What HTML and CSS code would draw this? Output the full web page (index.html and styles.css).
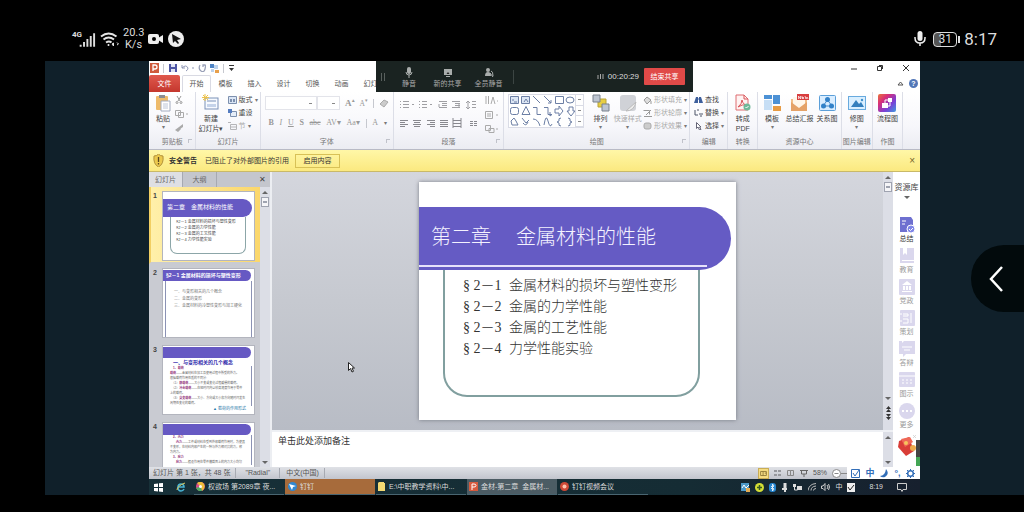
FILE: index.html
```html
<!DOCTYPE html>
<html lang="zh-CN">
<head>
<meta charset="utf-8">
<title>金材-第二章 金属材料的性能</title>
<link rel="stylesheet" href="styles.css">
</head>
<body>
<header class="phone-bar">
  <div class="phone-left">
    <svg width="25" height="18" viewBox="0 0 26 18"><path d="M9 15v2M12.500 12v5M16 9v8M19.500 6v11M23 3v14" stroke="#ddd" stroke-width="2"/></svg>
    <span class="net-type">4G</span>
    <svg width="19" height="18" viewBox="0 0 19 18" fill="none" stroke="#e4e4e4" stroke-width="2"><path d="M1 6.500q7.500-6 15.500 0M3.500 9.500q5-4 10.500 0M6 12.500q3-2 5.500 0"/><circle cx="8.500" cy="15" r="1" fill="#eee" stroke="none"/><path d="M12 14l1.500-1v3zM17 12.500l1.500 1.500-1.500 1" stroke-width="1"/></svg>
    <span class="net-speed">20.3<br>K/s</span>
    <svg width="16" height="12" viewBox="0 0 16 12"><rect y="1" width="11" height="10" rx="2" fill="#eee"/><path d="M10 5l5-3v8l-5-3z" fill="#eee"/><circle cx="6" cy="6" r="2"/></svg>
    <svg width="16" height="16" viewBox="0 0 16 16"><circle cx="8" cy="8" r="8" fill="#eee"/><path d="M4 3l9 5-4 1 2 3-1 1-3-3-2 2z" fill="#111"/></svg>
  </div>
  <div class="phone-right">
    <svg width="12" height="16" viewBox="0 0 12 16"><rect x="3.500" width="5" height="10" rx="2.500" fill="#eee"/><path d="M1 6v1q0 5 5 5t5-5V6M6 12v3" fill="none" stroke="#eee" stroke-width="1.500"/></svg>
    <span class="battery">31</span>
    <time class="phone-time">8:17</time>
  </div>
</header>

<main class="stage">
<section class="window">
  <div class="titlebar">
    <svg width="9" height="10" viewBox="0 0 9 10"><rect width="9" height="10" fill="#cf5b3c"/><path d="M3 8V2h2q2 0 2 2t-2 2H3" fill="none" stroke="#fff" stroke-width="1.300"/></svg>
    <i class="vline"></i>
    <svg width="8" height="8" viewBox="0 0 8 8"><path d="M0 0h8v8H0z" fill="#4f57a5"/><path d="M2 0h4v3H2zM2 5h4v3H2z" fill="#dfe4f4"/></svg>
    <svg width="13" height="8" viewBox="0 0 13 8" fill="none" stroke="#8f97b5"><path d="M1 1v3h3M1 4q4-4 6 0 0 2-2 3"/><path d="M11 4h2"/></svg>
    <svg width="8" height="8" viewBox="0 0 8 8" fill="none" stroke="#9aa1b8" stroke-width="1.300"><path d="M2 1Q0 5 3 7t4-2 0-4M7 1H5v2"/></svg>
    <svg width="9" height="9" viewBox="0 0 9 9"><path d="M0 0h4v4H0z" fill="#4c83c5"/><path d="M4 1h4v4H4zM1 5h3v3H1z" fill="#bcd2ec"/><path d="M5 6h4v3H5z" fill="#e8a04b"/></svg>
    <i class="vline"></i>
    <svg width="5" height="6" viewBox="0 0 5 6"><path d="M0 0h5v1H0zM0 3h5L2.500 6z" fill="#333"/></svg>
    <div class="win-buttons">
      <button aria-label="最小化"><svg width="8" height="8"><path d="M1 5h6" stroke="#333"/></svg></button>
      <button aria-label="还原"><svg width="8" height="8"><path d="M1.500 2.500h4v4h-4zM3 1.500h3.500V5" fill="none" stroke="#333"/></svg></button>
      <button aria-label="关闭"><svg width="8" height="8"><path d="M1 1l6 6M7 1L1 7" stroke="#333"/></svg></button>
    </div>
  </div>
  <nav class="tabs">
    <button class="tab file">文件</button><button class="tab active">开始</button><button class="tab">模板</button><button class="tab">插入</button><button class="tab">设计</button><button class="tab">切换</button><button class="tab">动画</button><button class="tab">幻灯</button>
    <span class="help"><svg width="7" height="5"><path d="M1 4l2.500-3L6 4z" fill="#fff" stroke="#555"/></svg><button class="help-dot" aria-label="帮助">?</button></span>
  </nav>

  <div class="share-bar">
    <span class="grip"></span>
    <button class="share-item"><svg width="10" height="11" viewBox="0 0 10 11"><rect x="3" width="4" height="7" rx="2" fill="#a9adac"/><path d="M2 5q0 3 3 3t3-3M5 8v3" fill="none" stroke="#a9adac"/></svg>静音</button>
    <button class="share-item"><svg width="10" height="11" viewBox="0 0 10 11"><path d="M1 2h8v6H1zM3 9h4v1H3z" fill="#a9adac"/><path d="M3.500 7L5 5l1.500 2z" fill="#222"/></svg>新的共享</button>
    <button class="share-item"><svg width="10" height="11" viewBox="0 0 10 11"><circle cx="4" cy="3" r="2" fill="#a9adac"/><path d="M1 9q0-4 3-4t3 4z" fill="#a9adac"/><path d="M7 4q2 0 2 5M6 6l3 4" stroke="#a9adac" fill="none"/></svg>全员静音</button>
    <i class="share-sep"></i>
    <span class="share-time"><svg width="7" height="7"><path d="M1 2v4M3.500 1v5M6 1v5" stroke="#aaa"/></svg>00:20:29</span>
    <button class="end-share">结束共享</button>
  </div>

  <div class="ribbon">
    <section class="group g-clip">
      <div class="body">
        <button class="big"><svg width="17" height="18" viewBox="0 0 17 18"><rect x="1" y="2" width="12" height="14" rx="1" fill="#eebb6b"/><path d="M4 1h6v3H4z" fill="#8c8d91"/><path d="M6 7h9v10H6z" fill="#fff" stroke="#a3acc0"/><path d="M8 10h5M8 12h5M8 14h5" stroke="#bcc6d8"/></svg>粘贴<span class="arr"></span></button>
        <div class="col wide">
          <svg width="8" height="8" viewBox="0 0 8 8" fill="none" stroke="#999"><path d="M2 0l3 5M6 0L3 5"/><circle cx="2" cy="6.500" r="1"/><circle cx="6" cy="6.500" r="1"/></svg>
          <svg width="14" height="8" viewBox="0 0 14 8" fill="none" stroke="#aaa"><path d="M.5.500h5v5h-5zM3.500 2.500h5v5h-5z"/><path d="M11 4h2"/></svg>
          <svg width="9" height="8" viewBox="0 0 9 8"><path d="M4 3l4-3v3L5 5zM0 6l4-3 2 2-3 3z" fill="#aaa"/></svg>
        </div>
      </div>
      <h2>剪贴板<i class="launch"></i></h2>
    </section>
    <section class="group g-slides">
      <div class="body">
        <button class="big"><svg width="17" height="18" viewBox="0 0 17 18"><rect x="3" y="4" width="13" height="11" fill="#f7faff" stroke="#7b91b8"/><path d="M5 7h9" stroke="#7b91b8"/><path d="M5 10h9v3H5z" fill="#c5d3ea"/><path d="M3 0v7M0 3.500h7M1 1l5 5M6 1L1 6" stroke="#edc34c"/></svg>新建<br>幻灯片▾</button>
        <div class="col">
          <button class="small"><svg width="9" height="8"><path d="M.5.500h8v7h-8z" fill="#dbe6f6" stroke="#7d90ae"/><path d="M2 3h2v3H2zM5 3h2v3H5z" fill="#7d90ae"/></svg>版式<span class="arr"></span></button>
          <button class="small"><svg width="9" height="8"><path d="M2.500 2.500h6v5h-6z" fill="#e5edf8" stroke="#7d90ae"/><path d="M0 0h4v4H0z" fill="#547cc0"/></svg>重设</button>
          <button class="small dim"><svg width="9" height="8"><path d="M0 .5h3M2.500 2.500h6v5h-6zM3 5h5" fill="none" stroke="#b5b5b8"/></svg>节<span class="arr"></span></button>
        </div>
      </div>
      <h2>幻灯片</h2>
    </section>
    <section class="group g-font">
      <div class="body stack">
        <div class="line"><select class="font-name" aria-label="字体"><option></option></select><select class="font-size" aria-label="字号"><option></option></select><b>A<sup>▴</sup></b><small>A<sup>▾</sup></small><i class="vline"></i><svg width="10" height="10"><path d="M1 6l4-4 4 2-4 5z" fill="#ccc" stroke="#aaa"/></svg></div>
        <div class="line spread"><b>B</b><em>I</em><u>U</u><b>S</b><s>abc</s><span>AV▾</span><span>Aa▾</span><i class="vline"></i><span>A</span><span class="arr"></span></div>
      </div>
      <h2>字体<i class="launch"></i></h2>
    </section>
    <section class="group g-para">
      <div class="body">
        <svg class="para-art" width="78" height="36" viewBox="0 0 78 36" fill="none" stroke="#a0a0a4"><path d="M1 5.500h1M1 8.500h1M1 11.500h1M4 5.500h6M4 8.500h6M4 11.500h6M13 8.500h2M20 5.500h1M20 8.500h1M20 11.500h1M23 5.500h5M23 8.500h5M23 11.500h5M31 8.500h2M40 5.500h8M43 7.500h5M43 9.500h5M40 11.500h8M40 8v3M53 5.500h8M56 7.500h5M56 9.500h5M53 11.500h8M60 8v3M69 5v8M67 7l2-2 2 2M67 11l2 2 2-2M73 5.500h4M73 8.500h4M73 11.500h4"/><path stroke="#88888e" d="M1 24.500h8M1 26.500h5M1 28.500h8M1 30.500h5M14 24.500h8M15 26.500h6M14 28.500h8M15 30.500h6M28 24.500h8M31 26.500h5M28 28.500h8M31 30.500h5M41 24.500h8M41 26.500h8M41 28.500h8M41 30.500h8M54 24.500h8M54 27.500h8M54 30.500h8M54 22v10M62 22v10M71 25.500h3M75 25.500h3M71 27.500h3M75 27.500h3M71 29.500h3M75 29.500h3"/></svg>
        <svg width="13" height="38" viewBox="0 0 13 38" fill="none" stroke="#aaa"><path d="M1 0v8M3.500 0v8M6 8l2-7 2 7M12 5h1M.5 15.500h7v7h-7zM2 18h4M2 20h4M11 19h2M.5 29.500h5v5h-5zM4 32.500h5v4H4zM11 33h2"/></svg>
      </div>
      <h2>段落<i class="launch"></i></h2>
    </section>
    <section class="group g-draw">
      <div class="body">
        <div class="gallery">
          <svg width="66" height="33" viewBox="0 0 66 33" fill="none" stroke="#6c7fa5"><path fill="#dce6f4" d="M1.500 1.500h8v7h-8zM12.500 1.500h8v7h-8z"/><path d="M3 5h2M5 7h3M15 7l2-3 2 3M24 1l7 7M35 1l7 7M42 5v3h-3M46.500 1.500h8v7h-8z"/><ellipse cx="61" cy="5" rx="4" ry="3"/><rect x="1.500" y="12.500" width="8" height="7" rx="2"/><path d="M13 19.500l4-8 4 8zM24 12.500h4v7h4M35 12.500h4v7h4M41 17v4l2-1.500M46 14h4v-3l4 5-4 5v-3h-4zM60 12h4v4h2l-4 5-4-5h2zM3 30l-1-4 3-3 2 3 2 4zM13 23l4 5 3-3M14 28q3 4 5-1M24 24q5 0 7 7M35 30q2-12 4-4t4 3M52 23q-3 0-2 3l-2 1 2 1q-1 3 2 3M59 23q3 0 2 3l2 1-2 1q1 3-2 3"/></svg>
          <div class="gallery-scroll"><i></i><i></i><i></i></div>
        </div>
        <button class="big"><svg width="18" height="18" viewBox="0 0 18 18"><path d="M6 5h8v8H6z" fill="#e7ce43" stroke="#b8a33a"/><path d="M1 1h7v7H1zM10 10h7v7h-7z" fill="#bdc5d1" stroke="#79818d"/></svg>排列<span class="arr"></span></button>
        <button class="big dim"><svg width="18" height="18" viewBox="0 0 18 18"><rect x="1" y="1" width="16" height="16" rx="3" fill="#d0d2d7"/><path d="M7 17q8 0 10-9z" fill="#eee" stroke="#bbb"/></svg>快速样式<span class="arr"></span></button>
        <div class="col">
          <button class="small dim"><svg width="9" height="8"><path d="M1 4l3-3 4 3-4 4zM8 5v3" fill="#ddd" stroke="#999"/></svg>形状填充<span class="arr"></span></button>
          <button class="small dim"><svg width="9" height="8"><path d="M.5 1.500h6v4M1 7.500h8M3 6l5-5" fill="none" stroke="#999"/></svg>形状轮廓<span class="arr"></span></button>
          <button class="small dim"><svg width="9" height="8"><rect x="1" y="1" width="7" height="6" rx="2" fill="#ccc" stroke="#aaa"/></svg>形状效果<span class="arr"></span></button>
        </div>
      </div>
      <h2>绘图<i class="launch"></i></h2>
    </section>
    <section class="group g-edit">
      <div class="body">
        <div class="col">
          <button class="small"><svg width="9" height="8"><path d="M0 7l2-6h2v6zM5 7V1h2l2 6z" fill="#3d5f9c"/><path d="M3 3h3" stroke="#3d5f9c"/></svg>查找</button>
          <button class="small"><svg width="9" height="8"><path d="M1 1v5h3M3 1h2M5 5h4M6 7h2" fill="none" stroke="#4d5468"/></svg>替换<span class="arr"></span></button>
          <button class="small"><svg width="9" height="8"><path d="M2.500.500v6L4 5l1.500 3L7 7.500 5.500 5H7z" fill="#fff" stroke="#667"/></svg>选择<span class="arr"></span></button>
        </div>
      </div>
      <h2>编辑</h2>
    </section>
    <section class="group g-pdf">
      <div class="body"><button class="big"><svg width="17" height="18" viewBox="0 0 17 18"><path d="M2 1h8l4 4v11H2z" fill="#fff3f2" stroke="#de6d70"/><path d="M10 1v4h4M4 13q4-3 4-7 1 5 5 5-5-1-9 2" fill="none" stroke="#d95358"/><circle cx="13" cy="13" r="3.500" fill="#70b999"/><path d="M11.500 13l1 1 2-2" stroke="#fff" fill="none"/></svg>转成<br>PDF</button></div>
      <h2>转换</h2>
    </section>
    <section class="group g-res">
      <div class="body">
        <button class="big"><svg width="17" height="18" viewBox="0 0 17 18"><path d="M0 1h8v4H0zM9 1h7v9H9z" fill="#4c91d5"/><path d="M0 6h8v10H0z" fill="#c6def5"/><path d="M9 12h8v5H9z" fill="#e79b43"/></svg>模板<span class="arr"></span></button>
        <button class="big"><svg width="19" height="18" viewBox="0 0 19 18"><path d="M1 5h16v12H1z" fill="#f1be88"/><path d="M3 3h12v8l-6 4-6-4z" fill="#fff6e9"/><path d="M1 8l8 6 8-6v9H1z" fill="#e5a267"/><path d="M7 0h12v6H7z" fill="#d83e3f"/><path d="M8.500 5V2l2 3V2M12 2v2.500h2M12 3.500h2M15 2l1 3 1-2 1 2" stroke="#fff" stroke-width=".7" fill="none"/></svg>总结汇报</button>
        <button class="big"><svg width="17" height="18" viewBox="0 0 17 18"><rect x=".5" y="1.500" width="16" height="15" rx="1" fill="#d9edff" stroke="#5b9fd9"/><path d="M8.500 6L4 12h9z" fill="none" stroke="#4288ca"/><circle cx="8.500" cy="5.500" r="2.500" fill="#3281c8"/><circle cx="4.500" cy="12" r="2.500" fill="#3281c8"/><circle cx="12.500" cy="12" r="2.500" fill="#3281c8"/></svg>关系图</button>
      </div>
      <h2>资源中心</h2>
    </section>
    <section class="group g-pic">
      <div class="body"><button class="big"><svg width="18" height="18" viewBox="0 0 18 18"><rect x=".5" y="2.500" width="17" height="13" fill="#d9efff" stroke="#68aade"/><path d="M3 13l5-7 3 4 2-2 3 5z" fill="#347fbd"/><circle cx="14" cy="6" r="1.200" fill="#4190cb"/></svg>修图<span class="arr"></span></button></div>
      <h2>图片编辑</h2>
    </section>
    <section class="group g-make">
      <div class="body"><button class="big"><svg width="18" height="18" viewBox="0 0 18 18"><defs><linearGradient id="rain" x2="1" y2="1"><stop stop-color="#e9763a"/><stop offset=".3" stop-color="#d92f78"/><stop offset=".65" stop-color="#7a3fd6"/><stop offset="1" stop-color="#3e9be0"/></linearGradient></defs><rect width="18" height="18" rx="2" fill="url(#rain)"/><path d="M4 9h6v5H4zM10 4h4v4h-4z" fill="#fff"/><path d="M7 9V6h4M12 8v4h-2" stroke="#fff" fill="none"/></svg>流程图</button></div>
      <h2>作图</h2>
    </section>
  </div>

  <div class="warning">
    <svg width="11" height="13" viewBox="0 0 11 13"><path d="M1 2q3 0 4.500-2Q7 2 10 2q1 8-4.500 11Q0 10 1 2z" fill="#ecc94d" stroke="#b1913b"/><path d="M5.500 3v5M5.500 9v1.500" stroke="#5c4a20" stroke-width="1.300"/></svg>
    <strong>安全警告</strong><span>已阻止了对外部图片的引用</span><button class="enable">启用内容</button><button class="warn-close" aria-label="关闭">×</button>
  </div>

  <div class="workspace">
    <aside class="outline">
      <div class="outline-tabs"><button class="on">幻灯片</button><button>大纲</button><button class="x" aria-label="关闭窗格">✕</button></div>
      <div class="outline-body">
        <ol class="thumbs">
          <li class="sel"><span>1</span><div class="mini one"><h3>第二章　金属材料的性能</h3><p>§2－1 金属材料的损坏与塑性变形<br>§2－2 金属的力学性能<br>§2－3 金属的工艺性能<br>§2－4 力学性能实验</p></div></li>
          <li><span>2</span><div class="mini two"><h3>§2－1 金属材料的损坏与塑性变形</h3><p>一、与变形相关的几个概念<br>二、金属的变形<br>三、金属材料的冷塑性变形与加工硬化</p></div></li>
          <li><span>3</span><div class="mini three"><h3></h3><h4>一、与变形相关的几个概念</h4><p>　<b>1、载荷</b><br><b>载荷</b>——金属材料在加工及使用过程中所受的外力。<br>根据载荷作用性质的不同分:<br>　（1）<b>静载荷</b>——大小不变或变化过程缓慢的载荷。<br>　（2）<b>冲击载荷</b>——在短时间内以较高速度作用于零件<br>上的载荷。<br>　（3）<b>交变载荷</b>——大小、方向或大小和方向随时间发生<br>周期性变化的载荷。</p><a href="#slide">▲ 载荷的作用形式</a></div></li>
          <li><span>4</span><div class="mini three"><h3></h3><p>　<b>2、内力</b><br>　　<b>内力</b>——工件或材料在受到外部载荷作用时，为使其<br>不变形，在材料内部产生的一种与外力相对抗的力，称<br>为内力。<br>　<b>3、应力</b><br>　　<b>应力</b>——假设作用在零件横截面上的内力大小均匀</p></div></li>
        </ol>
        <div class="vscroll"><i class="up"></i><i class="thumb"></i><i class="down"></i></div>
      </div>
    </aside>
    <div class="editor">
      <div class="canvas">
        <article class="slide" id="slide">
          <div class="slide-frame"></div>
          <h1>第二章　 金属材料的性能</h1>
          <ul>
            <li><span>§ 2－1</span>金属材料的损坏与塑性变形</li>
            <li><span>§ 2－2</span>金属的力学性能</li>
            <li><span>§ 2－3</span>金属的工艺性能</li>
            <li><span>§ 2－4</span>力学性能实验</li>
          </ul>
        </article>
        <svg class="cursor" width="7" height="11" viewBox="0 0 7 11"><path d="M.5.500v8l2-2 1.500 3.500 1.500-.7L4 6h2.500z" fill="#fff" stroke="#222"/></svg>
        <div class="vscroll"><i class="up"></i><i class="thumb"></i><i class="down"></i><i class="page"><svg width="5" height="14" viewBox="0 0 5 14"><path d="M0 3l2.500-3L5 3zM0 6l2.500-3L5 6zM0 8h5l-2.500 3zM0 11h5l-2.500 3z" fill="#333"/></svg></i></div>
      </div>
      <div class="notes"><p>单击此处添加备注</p><div class="vscroll"><i class="up"></i><i class="down"></i></div></div>
    </div>
    <aside class="library">
      <h2>资源库<i class="down"></i></h2>
      <button class="hot"><svg width="16" height="16" viewBox="0 0 16 16"><path d="M1 0h11l2 3v12H1z" fill="#6e70d0"/><path d="M3 4h4M3 7h3" stroke="#fff"/><circle cx="12" cy="12" r="4" fill="#7f86e8" stroke="#fff"/><path d="M10 12l1.500 1.500L14 11" stroke="#fff" fill="none"/></svg>总结</button>
      <button><svg width="16" height="16" viewBox="0 0 16 16"><path d="M1 0h14v15H1z" fill="#dad7ed"/><path d="M4 0v7l2-2 2 2V0zM3 12h12v1H3z" fill="#fff"/></svg>教育</button>
      <button><svg width="16" height="16" viewBox="0 0 16 16"><rect width="16" height="16" rx="1" fill="#dad7ed"/><path d="M3 6l5-4 5 4zM4 7h2v4H4zM7 7h2v4H7zM10 7h2v4h-2zM3 12h10v1H3z" fill="#fff"/></svg>党政</button>
      <button><svg width="16" height="16" viewBox="0 0 16 16"><rect x="1" width="15" height="16" rx="1" fill="#dad7ed"/><path d="M0 4h3M0 11h3M4 4h5v2H4M4 9h5v4H4M12 3v10" stroke="#fff" fill="none"/></svg>策划</button>
      <button><svg width="16" height="16" viewBox="0 0 16 16"><path d="M0 0h3v2l2-2h11v13H7l-3 3v-3H0z" fill="#dad7ed"/><path d="M3 6h10M5 9h6" stroke="#fff"/></svg>答辩</button>
      <button><svg width="16" height="16" viewBox="0 0 16 16"><rect width="16" height="15" rx="1" fill="#dad7ed"/><path d="M0 4h16M3 8h2M7 8h2M11 8h2M3 11h2M7 11h2M11 11h2" stroke="#fff"/></svg>图示</button>
      <button><svg width="16" height="16" viewBox="0 0 16 16"><circle cx="8" cy="8" r="8" fill="#dad7ed"/><path d="M3 8h2M7 8h2M11 8h2" stroke="#fff" stroke-width="2"/></svg>更多</button>
      <svg class="packet" width="24" height="32" viewBox="0 0 24 32"><path d="M3 7l10-4 5 14-8 5-8-9z" fill="#d93d37"/><path d="M5 5l9-2 3 5-8 5z" fill="#ef6857"/><circle cx="10" cy="9" r="2" fill="#f6c45c"/><circle cx="17" cy="14" r="3" fill="#edaa4c"/><path d="M17 1l3 3M20 1l-3 3" stroke="#ccc" stroke-width=".7"/><path d="M20 6h4v17h-4z" fill="#444"/><path d="M20 23h4v9h-4z" fill="#43a554"/></svg>
    </aside>
  </div>

  <footer class="status">
    <span>幻灯片 第 1 张，共 48 张</span><span>"Radial"</span><span>中文(中国)</span>
    <div class="views"><svg class="view-on" width="11" height="11" viewBox="0 0 11 11"><path d="M2 3h7v5H2zM5 3v5M7 5h2" fill="none" stroke="#856e30"/></svg><svg width="8" height="8"><path d="M0 1h3v2H0zM4 1h3v2H4zM0 5h3v2H0zM4 5h3v2H4z" fill="#96989d"/></svg><svg width="8" height="8"><path d="M.5 1.500h3v5h-3zM3.500 1.500h3v5h-3z" fill="none" stroke="#888"/></svg><svg width="8" height="8"><path d="M0 1.500h8M1.500 2v3h5V2M4 5v3" fill="none" stroke="#666"/></svg><span>58%</span><svg width="16" height="9"><circle cx="4.500" cy="4.500" r="4" fill="#fff" stroke="#888"/><path d="M2.500 4.500h4M9 4.500h7" stroke="#888"/></svg></div>
    <div class="ime"><svg width="9" height="9"><path d="M.5.500h8v8h-8zM2 4l2 3 4-6" fill="none" stroke="#326eb8"/></svg><b>中</b><svg width="9" height="9"><path d="M6 0q4 5-1 8-3 1-5-1 5 0 6-7z" fill="#326eb8"/></svg><b>°,</b><svg width="9" height="9"><circle cx="4.500" cy="4.500" r="2.800" fill="none" stroke="#326eb8" stroke-width="1.500"/><path d="M4.500 0v2M4.500 7v2M0 4.500h2M7 4.500h2M1 1l1.500 1.500M6.500 6.500L8 8M8 1L6.500 2.500M1 8l1.500-1.500" stroke="#326eb8"/></svg></div>
  </footer>
  <footer class="taskbar">
    <button class="sys" aria-label="开始"><svg width="9" height="9"><path d="M0 1l4-.5V4H0zM5 .3L9 0v4H5zM0 5h4v3.500L0 8zM5 5h4v4l-4-.4z" fill="#fff"/></svg></button>
    <button class="sys" aria-label="浏览器"><svg width="10" height="10" viewBox="0 0 10 10" fill="none"><path d="M2 5h6q0-3-3-3T2 5q0 4 3 4 2 0 3-2" stroke="#49b4d5" stroke-width="1.600"/><path d="M1 8q0-4 8-7" stroke="#e4cc5a"/></svg></button>
    <button class="app"><svg width="9" height="9"><circle cx="4.500" cy="4.500" r="4.500" fill="#d84d88"/><path d="M4.500 4.500L1 1Q5-2 8 2zM4.500 4.500L8 2q2 4-2 7z" fill="#edbd39"/><path d="M4.500 4.500L6 9Q2 10 0 6z" fill="#51ae62"/><circle cx="4.500" cy="4.500" r="1.500" fill="#fff"/></svg>权欲场 第2089章 夜...</button>
    <button class="app orange"><svg width="9" height="9"><circle cx="4.500" cy="4.500" r="4.500" fill="#3288d0"/><path d="M1 2l7 2-3 1-1 3z" fill="#fff"/></svg>钉钉</button>
    <button class="app"><svg width="8" height="9"><path d="M1 0h5v1h1v8H0V1z" fill="#f3d973"/></svg>E:\中职教学资料\中...</button>
    <button class="app current"><svg width="9" height="9"><path d="M0 0h9v9H0z" fill="#d75b3e"/><path d="M3 8V2h2q2 0 2 1.500T5 5H3" stroke="#fff" fill="none"/></svg>金材-第二章&nbsp; 金属材...</button>
    <button class="app"><svg width="9" height="9"><circle cx="4.500" cy="4.500" r="4.500" fill="#cf4936"/><circle cx="4.500" cy="4.500" r="2" fill="#ffc3ae"/></svg>钉钉视频会议</button>
    <div class="tray">
      <svg width="9" height="9"><path d="M0 0h8v8H0z" fill="#4c9ac9"/><path d="M1 5l2-3 2 3 3-3" stroke="#fff" fill="none"/><path d="M5 5h4v4H5z" fill="#e3ad54"/></svg>
      <svg width="9" height="9"><circle cx="4.500" cy="4.500" r="4.500" fill="#d3de35"/><path d="M2 4.500h5M4.500 2v5" stroke="#385820" stroke-width="1.500"/></svg>
      <svg width="7" height="9"><rect width="7" height="9" rx="3" fill="#2585d0"/><path d="M2 3l3 3-1.500 2V1L5 3 2 6" stroke="#fff" stroke-width=".8" fill="none"/></svg>
      <svg width="7" height="9"><path d="M2.500 0h3v5h-3zM1 5h5v2H1zM3 7h2v2H3z" fill="#ddd"/></svg>
      <svg width="10" height="8"><path d="M0 1h3v3H0zM4 3h5v4H4z" fill="#ddd"/><path d="M1.500 4v3h3" stroke="#ddd" fill="none"/></svg>
      <svg width="8" height="8" fill="none" stroke="#bbb"><path d="M0 7.500Q1 1 8 .500M3 7.500q0-4 5-4.500M5.500 7.500q0-2 2.500-2"/></svg>
      <svg width="9" height="8" fill="none" stroke="#ccc"><path d="M.5 3v2.500H2l2 2v-7L2 3zM6 2q2 2 0 4M7.500 1q2 3 0 6"/></svg>
      <span>中</span>
      <svg width="8" height="9"><path d="M0 0h8v9H0z" fill="#eee"/><path d="M1 4l2 3 4-5" stroke="#222" fill="none"/></svg>
      <time>8:19</time>
      <svg width="10" height="10"><path d="M.5 1.500h9v6H6l-1 2-1-2H.5z" fill="none" stroke="#ccc"/></svg>
    </div>
  </footer>
</section>
<button class="back" aria-label="返回"><svg width="16" height="28" viewBox="0 0 16 28"><path d="M14 2L3 14l11 12" fill="none" stroke="#fff" stroke-width="2.500"/></svg></button>
</main>
</body>
</html>
```
FILE: styles.css
```css
* { box-sizing: border-box; }
body { margin: 0; min-height: 100vh; display: flex; flex-direction: column; background: #000; color: #444; font: 7px/10px "Liberation Sans", "Noto Sans CJK SC", sans-serif; }
button, select { border: 0; padding: 0; margin: 0; background: none; color: inherit; font: inherit; }
h1, h2, h3, h4, p, ul, ol { margin: 0; padding: 0; font-weight: normal; list-style: none; }
svg { flex: none; }
.vline { width: 1px; height: 9px; background: #c6c8cf; }
.arr::after { content: "▾"; color: #777; font-size: 6px; }

.phone-bar { height: 61px; display: flex; justify-content: space-between; padding: 17px 27px 0 72px; color: #ddd; font-family: Roboto, sans-serif; }
.phone-left, .phone-right { display: flex; align-items: center; height: 44px; }
.phone-left { position: relative; gap: 4px; }
.phone-left > svg:first-child { margin-right: -1px; }
.net-type { position: absolute; left: 0; top: 13px; font-size: 8px; font-weight: bold; }
.net-speed { width: 21px; font-size: 11px; line-height: 12px; text-align: center; }
.phone-right { gap: 7px; }
.battery { position: relative; width: 24px; height: 15px; border: 1px solid #ddd; border-radius: 4px; background: linear-gradient(90deg, #555 31%, #000 31%); font-size: 12px; line-height: 13px; text-align: center; }
.battery::after { content: ""; position: absolute; right: -4px; top: 3px; width: 2px; height: 7px; background: #ddd; }
.phone-time { font-size: 17px; line-height: 20px; }

.stage { position: relative; flex: 1; display: flex; margin: 0 0 17px 45px; padding: 0 104px; background: #10202a; }
.window { position: relative; flex: 1; min-width: 0; display: flex; flex-direction: column; background: #fff; }
.titlebar { height: 14px; display: flex; align-items: center; gap: 5px; padding: 0 10px 0 1px; }
.titlebar > svg { margin-right: -1px; }
.win-buttons { margin-left: auto; display: flex; gap: 18px; }
.win-buttons button, .win-buttons svg { display: block; }
.tabs { height: 17px; display: flex; align-items: stretch; }
.tab { width: 29px; color: #555; }
.tab.file { width: 31px; margin-right: 2px; background: linear-gradient(#e0594d, #c4372e); color: #fff; border-radius: 2px 2px 0 0; }
.tab.active { border: 1px solid #d9dae3; border-bottom: 0; border-radius: 2px 2px 0 0; }
.help { margin-left: auto; display: flex; align-items: center; gap: 5px; padding-right: 2px; }
.help-dot { width: 9px; height: 9px; border-radius: 50%; background: #5277b8; color: #fff; line-height: 9px; font-weight: bold; }

.share-bar { position: absolute; left: 227px; top: 0; width: 317px; height: 31px; display: flex; align-items: center; background: #1a2321; color: #aaa; }
.grip { width: 4px; height: 8px; margin: 0 6px 0 5px; border: solid #59605e; border-width: 0 1px; }
.share-item { width: 41px; display: flex; flex-direction: column; align-items: center; line-height: 10px; padding-top: 2px; }
.share-item:nth-child(2) { width: 36px; }
.share-item svg { margin-bottom: 1px; }
.share-sep { width: 1px; height: 14px; margin-left: 4px; background: #3c4543; }
.share-time { margin-left: auto; display: flex; gap: 4px; align-items: center; font-size: 8px; color: #ddd; }
.end-share { width: 41px; height: 17px; margin: 0 8px 0 5px; border-radius: 1px; background: #e04a48; color: #fff; }

.ribbon { height: 58px; display: flex; padding: 0; background: linear-gradient(#fff, #f7f7fb 60%, #ebecf2); border-bottom: 1px solid #b8bac5; }
.group { display: flex; flex-direction: column; border-right: 1px solid #dcdee7; min-width: 0; }
.g-clip { flex: 47 0 0; }
.g-slides { flex: 64 0 0; }
.g-font { flex: 134 0 0; }
.g-para { flex: 111 0 0; }
.g-draw { flex: 187 0 0; }
.g-edit { flex: 38 0 0; }
.g-pdf { flex: 29 0 0; }
.g-res { flex: 84 0 0; }
.g-pic { flex: 30 0 0; }
.g-make { flex: 30 0 0; }
.ribbon::after { content: ""; flex: 17 0 0; }
.body { flex: 1; display: flex; padding: 2px 2px 0; justify-content: space-between; white-space: nowrap; }
.g-pdf .body, .g-pic .body, .g-make .body { justify-content: center; }
.group h2 { position: relative; height: 13px; font-size: 7px; line-height: 11px; text-align: center; color: #777; white-space: nowrap; }
.launch { position: absolute; right: 3px; top: 3px; width: 4px; height: 4px; border: solid #c0c2ca; border-width: 1px 0 0 1px; }
.big { display: flex; flex-direction: column; align-items: center; gap: 0; line-height: 10px; min-width: 24px; }
.big > svg { margin-bottom: 2px; }
.big .arr { line-height: 6px; }
.dim { color: #aaa; }
.col { display: flex; flex-direction: column; gap: 2px; }
.col.wide { gap: 6px; padding: 2px 4px 0 0; }
.small { display: flex; align-items: center; gap: 2px; height: 11px; }
.stack { flex-direction: column; justify-content: flex-start; gap: 6px; padding: 4px 4px 0; color: #999; font-family: "Liberation Serif", "Noto Sans CJK SC", serif; }
.line { display: flex; align-items: center; height: 14px; gap: 5px; font-size: 9px; }
.line sup { font-size: 5px; line-height: 5px; }
.spread { font-size: 8px; justify-content: space-between; padding: 0 2px 0 4px; }
.font-name, .font-size { appearance: none; height: 14px; border: 1px solid #e3e4ea; background: linear-gradient(#888, #888) calc(100% - 4px) 50% / 3px 1px no-repeat #fff; }
.font-name { width: 58px; margin-right: -5px; }
.font-size { width: 25px; }
.g-para .body { padding: 4px 5px 0; }
.gallery { display: flex; height: 34px; margin: 0 3px 0 2px; border: 1px solid #dadce6; background: #fff; }
.gallery-scroll { width: 8px; display: flex; flex-direction: column; border-left: 1px solid #dadce6; }
.gallery-scroll i { flex: 1; border-bottom: 1px solid #dadce6; background: linear-gradient(#888, #888) 50% 50% / 3px 1px no-repeat; }
.g-edit .body { padding-left: 4px; }
.g-res .body { gap: 1px; }

.warning { height: 22px; display: flex; align-items: center; padding: 0 5px 0 4px; background: linear-gradient(#fff7a7, #fbe980); border-bottom: 1px solid #c9b968; color: #333; }
.warning strong { margin: 0 8px 0 5px; }
.enable { width: 45px; height: 14px; margin-left: 6px; border: 1px solid #d8c157; }
.warn-close { margin-left: auto; font-size: 10px; color: #75652c; }

.workspace { flex: 1; min-height: 0; display: flex; background: #d9dbe1; }
.outline { width: 123px; display: flex; flex-direction: column; border-right: 2px solid #eceef2; box-shadow: inset -1px 0 #aeb1b9; overflow: hidden; }
.outline-tabs { height: 15px; display: flex; background: #c4c6cd; color: #666; }
.outline-tabs button { width: 34px; border-right: 1px solid #a6a9b1; }
.outline-tabs .on { background: #dedfe4; }
.outline-tabs .x { margin-left: auto; width: 16px; border: 0; font-size: 8px; color: #444; }
.outline-body { flex: 1; min-height: 0; display: flex; }
.thumbs { height: 280px; flex: 1; overflow: hidden; background: #c9cbd2; }
.thumbs li { display: flex; height: 77px; padding: 4px 5px 3px 4px; }
.thumbs li.sel { background: linear-gradient(90deg, #fff0aa, #fbd76b); border-bottom: 2px solid #c9cbd2; border-left: 2px solid #f2cf63; padding-left: 2px; }
.thumbs li > span { width: 9px; font-weight: bold; }
.mini { flex: 1; min-width: 0; height: 70px; overflow: hidden; background: #fff; border: 1px solid #b3b5be; white-space: nowrap; }
.mini h3 { background: #6659c3; color: #fff; }
.mini.one h3 { height: 18px; margin: 7px 2px 0 0; padding-left: 4px; border-radius: 0 9px 9px 0; font-size: 6px; line-height: 17px; }
.mini.one p { height: 37px; margin: 0 8px 0 7px; padding: 2px 0 0 5px; border: 1px solid #8ca6a8; border-top: 0; border-radius: 0 0 7px 7px; font-size: 4px; line-height: 6px; }
.mini.two h3, .mini.three h3 { height: 11px; margin: 1px 3px 0 0; padding-left: 3px; border-radius: 0 6px 6px 0; font-size: 5px; line-height: 11px; font-weight: bold; }
.mini.two p { margin: 0 2px; padding: 7px 0 50px 8px; border: solid #8b92b4; border-width: 0 1px; font-size: 4px; line-height: 7px; color: #777; }
.mini.three p { margin: 0 2px; padding: 0 3px 0 5px; font-size: 3px; line-height: 5px; color: #666; border-right: 1px solid #8b92b4; }
.mini.three h4 { padding-left: 10px; font-size: 5px; line-height: 8px; font-weight: bold; color: #2b25aa; }
.mini.three b { color: #8b2470; }
.mini a { display: block; padding-left: 50px; color: #2577a9; font-size: 4px; line-height: 5px; text-decoration: none; }
.vscroll { width: 10px; display: flex; flex-direction: column; align-items: center; gap: 3px; padding: 4px 0 3px; background: #dcdee6; }
.vscroll i { display: block; }
.up { border: 3px solid transparent; border-top: 0; border-bottom: 3px solid #666; }
.down { border: 3px solid transparent; border-bottom: 0; border-top: 3px solid #666; }
.vscroll .down { margin-top: auto; }
.vscroll .thumb { width: 8px; height: 10px; border: 1px solid #9fa3b0; background: linear-gradient(#9fa3b0, #9fa3b0) 50% 50% / 4px 2px no-repeat #f5f5f8; }
.page { height: 24px; padding-top: 3px; }
.page svg { display: block; }

.editor { flex: 1; min-width: 0; display: flex; flex-direction: column; }
.canvas { position: relative; flex: 1; display: flex; justify-content: center; background: linear-gradient(#d4d6dd, #c6c9d0 50%, #b8bcc5); }
.canvas .vscroll { margin-left: auto; }
.slide { position: relative; width: 317px; height: 238px; margin: 10px 0 0 147px; background: #fff; box-shadow: 0 0 4px #777a84; font-family: "Liberation Serif", "Noto Sans CJK SC", serif; display: flex; flex-direction: column; }
.slide h1 { position: relative; height: 63px; margin: 25px 5px 0 0; padding-left: 12px; border-radius: 0 32px 32px 0; background: #655bc4; color: #f4f2ff; font-size: 20px; line-height: 60px; font-weight: 300; white-space: nowrap; }
.slide h1::after { content: ""; position: absolute; left: 0; right: 24px; bottom: 3px; height: 2px; background: #e6e2fb; }
.slide-frame { position: absolute; inset: 60px 36px 23px 24px; border: 2px solid #819f9f; border-radius: 24px; }
.slide ul { position: relative; padding: 6px 0 0 44px; font-size: 14px; line-height: 20px; font-weight: 300; color: #333; }
.slide li { display: flex; white-space: nowrap; }
.slide li + li { padding-top: 1px; }
.slide li span { width: 46px; }
.cursor { position: absolute; left: 76px; top: 190px; }
.notes { height: 37px; display: flex; justify-content: space-between; border-top: 2px solid #eef0f4; background: #fff; }
.notes p { padding: 3px 6px; font-size: 9px; line-height: 13px; color: #333; }
.library { width: 27px; display: flex; flex-direction: column; align-items: center; background: #fff; }
.library h2 { height: 45px; padding-top: 10px; font-size: 8px; line-height: 12px; display: flex; flex-direction: column; align-items: center; gap: 2px; white-space: nowrap; }
.library button { height: 31px; display: flex; flex-direction: column; align-items: center; color: #999; }
.library .hot { color: #333; }
.library button svg { margin-bottom: 1px; }
.packet { align-self: flex-end; }

.status { height: 12px; display: flex; align-items: center; background: linear-gradient(#dfe1e6, #c2c5cd); white-space: nowrap; color: #555; }
.status > span { padding: 0 5px 0 4px; border-right: 1px solid #a7aab2; }
.status > span:nth-child(2) { padding: 0 9px; }
.status > span:nth-child(3) { padding: 0 5px 0 6px; }
.views { margin-left: auto; display: flex; align-items: center; gap: 5px; }
.view-on { background: #f6dd83; border: 1px solid #c9ad56; }
.views > svg:last-child { margin-right: -1px; }
.ime { width: 73px; height: 13px; display: flex; align-items: center; justify-content: space-between; padding: 0 5px 0 4px; background: #fff; color: #326eb8; font-size: 9px; }
.taskbar { height: 16px; display: flex; background: linear-gradient(90deg, #173038, #152c34 70%, #17202e); color: #ddd; }
.sys { width: 18px; display: grid; place-items: center; }
.sys + .sys { width: 27px; }
.app { width: 90px; margin-right: 1px; display: flex; align-items: center; gap: 3px; padding-left: 2px; border-bottom: 1px solid #496571; white-space: nowrap; overflow: hidden; }
.app.orange { background: #a76b3b; padding-left: 3px; }
.app.current { background: #4c5c64; }
.tray { flex: 1; display: flex; align-items: center; justify-content: flex-end; gap: 5px; padding-right: 13px; }
.tray time { margin: 0 9px; }
.back { position: absolute; right: 0; top: 184px; width: 53px; height: 67px; border-radius: 33px 0 0 33px; background: #020a0c; display: flex; align-items: center; padding-left: 17px; }
```
